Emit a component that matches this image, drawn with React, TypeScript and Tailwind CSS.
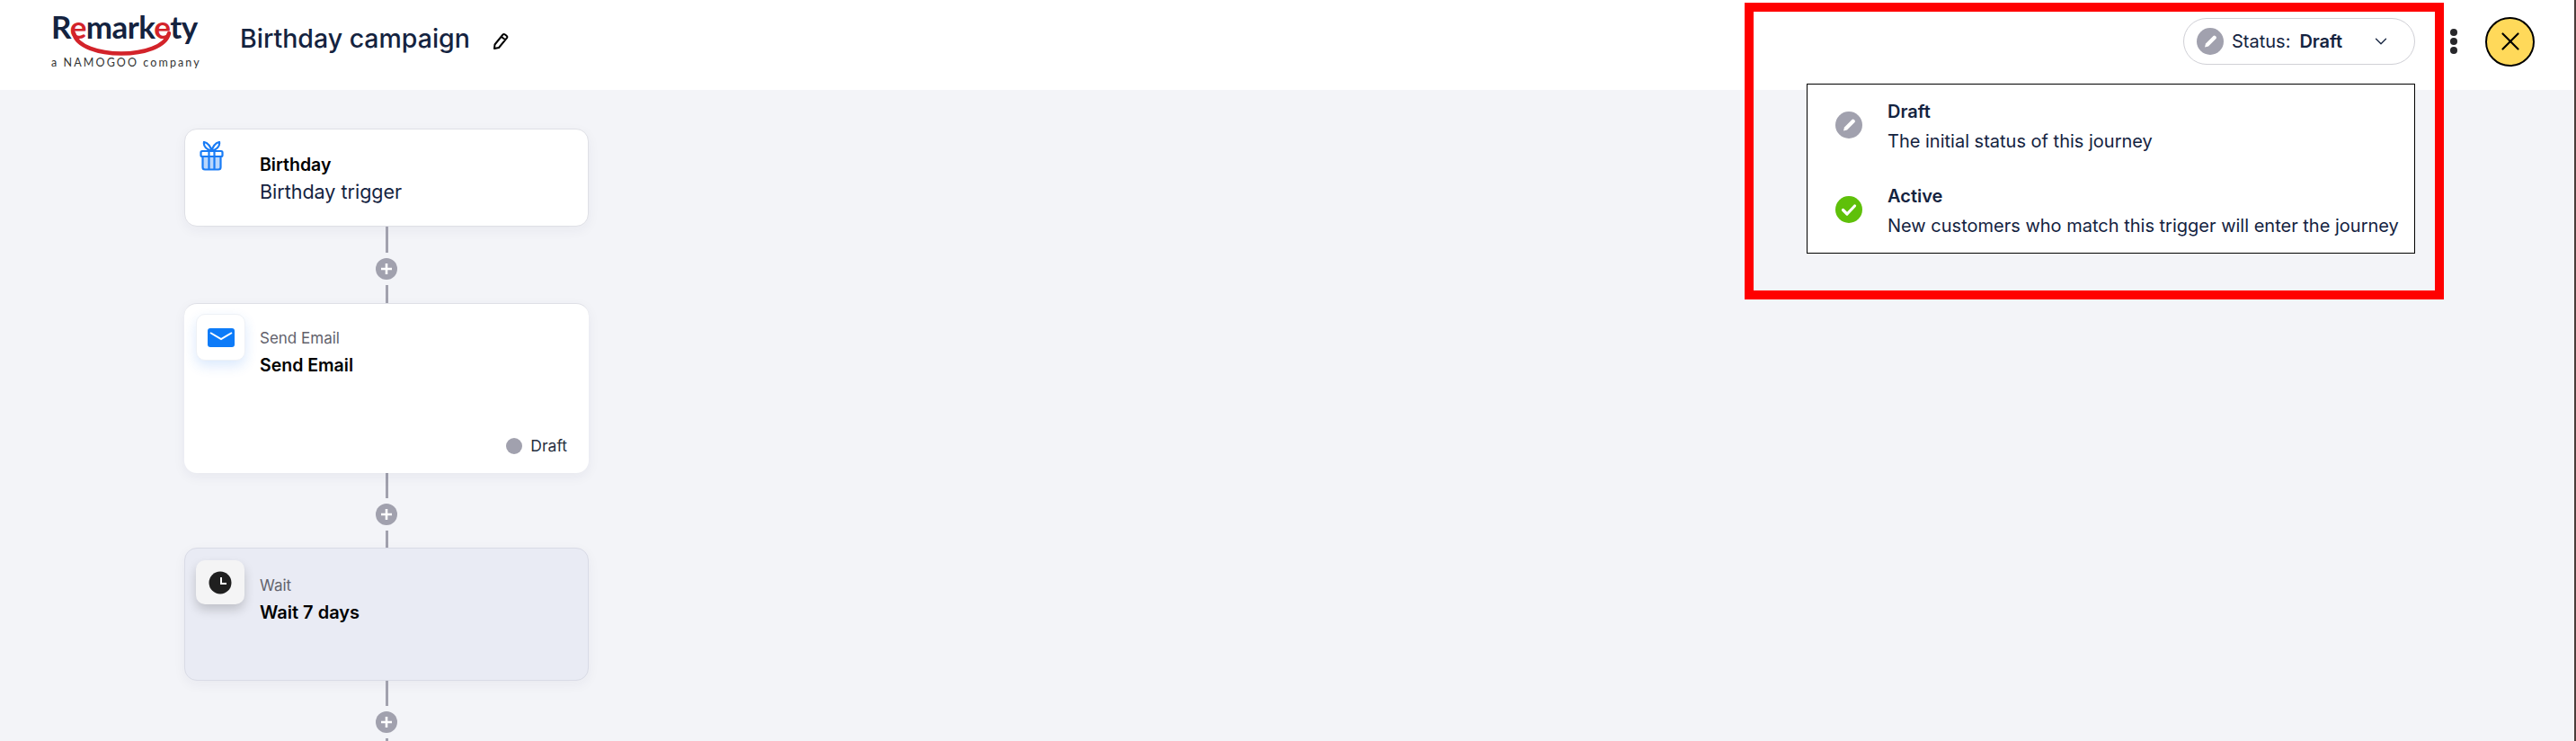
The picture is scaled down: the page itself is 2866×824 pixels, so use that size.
import React from 'react';
import { ChevronDown, X } from 'lucide-react';

const PencilGlyph = ({ size }: { size: number }) => (
  <svg width={size} height={size} viewBox="0 0 30 30">
    <circle cx="15" cy="15" r="15" fill="#a1a1ae" />
    <path d="M9 21.5 L10 17.5 L18.5 9 Q19.5 8 20.8 9 L21.5 9.7 Q22.5 11 21.5 12 L13 20.5 Z" fill="#fff" />
  </svg>
);

const CheckGlyph = ({ size }: { size: number }) => (
  <svg width={size} height={size} viewBox="0 0 30 30">
    <circle cx="15" cy="15" r="15" fill="#5fc00a" />
    <path d="M8.5 15.5 L13 20 L21.5 11" fill="none" stroke="#fff" strokeWidth="3.2" strokeLinecap="round" strokeLinejoin="round" />
  </svg>
);

const Connector = ({ top, bottom }: { top: number; bottom: number }) => (
  <div className="flex flex-col items-center pl-[1px]">
    <div className="w-[3px] bg-[#a1a1ae]" style={{ height: top }} />
    <div className="my-[6px] ml-[-1px] flex h-6 w-6 items-center justify-center rounded-full bg-[#a1a1ae]">
      <svg width="16" height="16" viewBox="0 0 16 16">
        <path d="M8 2 V14 M2 8 H14" stroke="#fff" strokeWidth="2.6" />
      </svg>
    </div>
    <div className="w-[3px] bg-[#a1a1ae]" style={{ height: bottom }} />
  </div>
);

const Logo = () => (
  <div className="relative flex h-[66px] w-[166px] shrink-0 flex-col font-['Lato',sans-serif] text-[#14233f]">
    <div className="text-[35px] leading-[24px] font-bold tracking-[-0.6px] whitespace-nowrap">
      R<span className="text-[#d3232a]">e</span>mark<span className="text-[#d3232a]">e</span>ty
    </div>
    <svg className="absolute top-[17px] left-[22px]" width="112" height="30" viewBox="0 0 112 30">
      <path d="M3 3 C 10 33, 102 33, 109 3" fill="none" stroke="#d3232a" strokeWidth="4.5" strokeLinecap="round" />
    </svg>
    <div className="mt-[22px] text-[12.5px] leading-[14px] tracking-[2.1px] whitespace-nowrap text-[#333]">a NAMOGOO company</div>
  </div>
);

export default function App() {
  return (
    <div className="flex h-[824px] w-full overflow-hidden">
      <div className="flex h-full w-[2864px] shrink-0 flex-col bg-[#f3f4f8] font-['Inter','Noto_Sans',sans-serif]">
        <header className="relative flex h-[100px] shrink-0 items-center bg-white pl-[57px]">
          <Logo />
          <h1 className="mb-[14px] ml-[44px] text-[28.5px] leading-[36px] font-medium whitespace-nowrap text-[#14233f]">Birthday campaign</h1>
          <svg className="mb-[9px] ml-[24px]" width="20" height="20" viewBox="0 0 20 20" fill="none" stroke="#000" strokeWidth="2" strokeLinejoin="round">
            <path d="M3 18 L3.5 13.5 L12.5 2.5 Q13.5 1.5 15 2.5 L16.5 3.8 Q18 5 17 6.2 L8 17 Z M11 5 L15.5 8.5" />
          </svg>

          <div className="mb-[8px] ml-auto flex items-center pr-[44px]">
            <div className="flex h-[52px] w-[258px] items-center rounded-full border border-[#d0d0d6] pr-[26px] pl-[14px] text-[#14233f]">
              <PencilGlyph size={30} />
              <span className="ml-[9px] text-[20px]">Status:</span>
              <span className="ml-[10px] text-[20px] font-semibold">Draft</span>
              <ChevronDown className="ml-auto" size={22} strokeWidth={1.4} />
            </div>
            <div className="ml-[39px] flex flex-col gap-[2px]">
              <span className="h-2 w-2 rounded-full bg-[#27272a]" />
              <span className="h-2 w-2 rounded-full bg-[#27272a]" />
              <span className="h-2 w-2 rounded-full bg-[#27272a]" />
            </div>
            <div className="ml-[31px] flex h-[55px] w-[55px] items-center justify-center rounded-full border-2 border-black bg-[#ffd95a]">
              <X size={34} strokeWidth={1.5} className="text-black" />
            </div>
          </div>

          {/* highlighted status menu */}
          <div className="absolute top-[3px] left-[1941px] z-10 h-[330px] w-[778px] border-10 border-[#ff0000]" />
          <div className="absolute top-[93px] left-[2010px] z-20 flex h-[189px] w-[677px] flex-col border border-black bg-white pt-[16px] pl-[31px] text-[#14233f]">
            <div className="flex h-[94px] items-start">
              <div className="mt-[14px]"><PencilGlyph size={30} /></div>
              <div className="ml-[28px]">
                <div className="text-[20px] leading-[28px] font-semibold">Draft</div>
                <div className="mt-[5px] text-[20px] leading-[28px]">The initial status of this journey</div>
              </div>
            </div>
            <div className="flex items-start">
              <div className="mt-[14px]"><CheckGlyph size={30} /></div>
              <div className="ml-[28px]">
                <div className="text-[20px] leading-[28px] font-semibold">Active</div>
                <div className="mt-[5px] text-[20px] leading-[28px] whitespace-nowrap">New customers who match this trigger will enter the journey</div>
              </div>
            </div>
          </div>
        </header>

        <main className="ml-[205px] flex w-[450px] flex-col pt-[43px]">
          <div className="flex h-[109px] rounded-[14px] border border-[#dfe0e6] bg-white shadow-[0_4px_14px_rgba(30,40,80,0.05)]">
            <svg className="mt-[13px] ml-[16px]" width="27" height="33" viewBox="0 0 27 33" fill="none" stroke="#1a7cf5" strokeWidth="2.2">
              <path d="M13.5 11 C 8 9, 4 6, 5 1 C 9 2, 12 5, 13.5 11 C 15 5, 18 2, 22 1 C 23 6, 19 9, 13.5 11 Z" />
              <rect x="4" y="17" width="19" height="14" fill="#1a7cf5" fillOpacity="0.3" stroke="none" />
              <rect x="1.5" y="11" width="24" height="6" rx="1.5" />
              <path d="M3.5 17 V29 Q3.5 31.5 6 31.5 H21 Q23.5 31.5 23.5 29 V17 M10.5 11 V31 M16.5 11 V31" />
            </svg>
            <div className="mt-[25px] ml-[40px]">
              <div className="text-[19.5px] leading-[28px] font-semibold text-black">Birthday</div>
              <div className="mt-[1px] text-[21.5px] leading-[30px] text-[#14233f]">Birthday trigger</div>
            </div>
          </div>
          <Connector top={29} bottom={20} />
          <div className="relative flex h-[189px] rounded-[14px] border-t border-[#dfe0e6] bg-white shadow-[0_4px_14px_rgba(30,40,80,0.06)]">
            <div className="mt-[11px] ml-[13px] flex h-[52px] w-[55px] items-center justify-center rounded-[10px] border border-[#eef1f6] bg-white shadow-[0_6px_14px_rgba(30,120,245,0.16)]">
              <svg width="30" height="21" viewBox="0 0 30 21">
                <rect width="30" height="21" rx="3" fill="#0d7bf8" />
                <path d="M3 5 L15 12 L27 5" fill="none" stroke="#fff" strokeWidth="2" />
              </svg>
            </div>
            <div className="mt-[26px] ml-[16px]">
              <div className="text-[17px] leading-[24px] text-[#62626c]">Send Email</div>
              <div className="mt-[5px] text-[19.5px] leading-[26px] font-semibold text-black">Send Email</div>
            </div>
            <div className="absolute right-[24px] bottom-[18px] flex items-center">
              <span className="h-[18px] w-[18px] rounded-full bg-[#a1a1ae]" />
              <span className="ml-[9px] text-[17.5px] leading-[24px] text-[#27303f]">Draft</span>
            </div>
          </div>
          <Connector top={28} bottom={19} />
          <div className="flex h-[148px] rounded-[14px] border border-[#d9dbe6] bg-[#e9ebf4] shadow-[0_4px_14px_rgba(30,40,80,0.05)]">
            <div className="mt-[13px] ml-[12px] flex h-[49px] w-[54px] items-center justify-center rounded-[10px] bg-[#f4f4f5] shadow-[0_6px_12px_rgba(0,0,0,0.18)]">
              <svg width="26" height="26" viewBox="0 0 26 26">
                <circle cx="13" cy="13" r="12.5" fill="#1f1f1f" />
                <path d="M14 7 V14 H20" fill="none" stroke="#fff" strokeWidth="2" />
              </svg>
            </div>
            <div className="mt-[29px] ml-[17px]">
              <div className="text-[17px] leading-[24px] text-[#62626c]">Wait</div>
              <div className="mt-[5px] text-[20px] leading-[26px] font-semibold text-black">Wait 7 days</div>
            </div>
          </div>
          <Connector top={28} bottom={20} />
        </main>
      </div>
      <div className="h-full grow bg-[#4a3d3a]" />
    </div>
  );
}
